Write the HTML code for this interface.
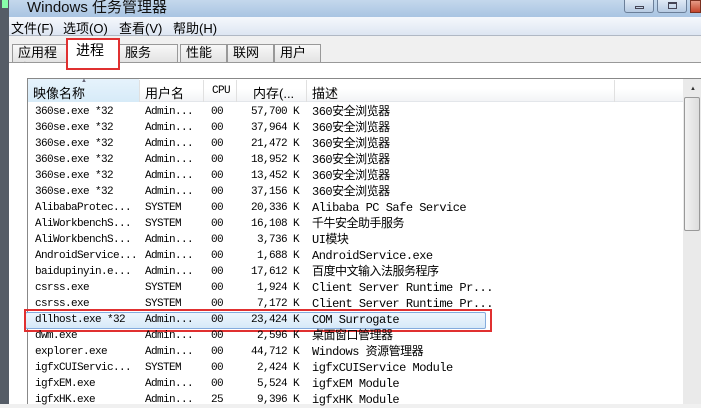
<!DOCTYPE html><html><head><meta charset="utf-8"><style>
*{margin:0;padding:0;box-sizing:border-box}
body{width:701px;height:404px;overflow:hidden;background:#f0f0f0;position:relative;font-family:"Liberation Sans","Noto Sans CJK SC",sans-serif;font-size:12px;color:#000}
.a{position:absolute}
.mono{font-family:"Liberation Mono","Noto Sans CJK SC",monospace;font-size:11px;letter-spacing:-0.6px}
.row{position:absolute;left:28px;width:655px;height:16px;line-height:16px}
.row span{position:absolute;white-space:nowrap}
.tab{position:absolute;top:44px;height:18px;border:1px solid #999;border-bottom:none;background:linear-gradient(#f8f8f8,#e3e3e3);font-size:13px;line-height:16px;padding-left:5px}
.sep{position:absolute;top:80px;width:1px;height:22px;background:#e0e0e0}
</style></head><body>
<div class="a" style="left:0;top:0;width:701px;height:17px;background:linear-gradient(#c4d8ec,#a9c4e2)"></div>
<div class="a" style="left:0;top:0;width:9px;height:404px;background:#555c66"></div>
<div class="a" style="left:2px;top:0;width:6px;height:8px;background:#8fa"></div>
<div class="a" style="left:27px;top:-4px;font-size:15px;color:#111">Windows 任务管理器</div>
<div class="a" style="left:624px;top:0;width:30px;height:13px;border:1px solid #6b7f99;border-top:none;border-radius:0 0 3px 3px;background:linear-gradient(#dfe9f5,#b7cbe3)"><div class="a" style="left:10px;top:6px;width:9px;height:3px;border:1px solid #445"></div></div>
<div class="a" style="left:657px;top:0;width:30px;height:13px;border:1px solid #6b7f99;border-top:none;border-radius:0 0 3px 3px;background:linear-gradient(#dfe9f5,#b7cbe3)"><div class="a" style="left:10px;top:2px;width:9px;height:7px;border:1px solid #445;border-top-width:2px"></div></div>
<div class="a" style="left:690px;top:0;width:11px;height:13px;background:linear-gradient(#e69a86,#c4452b);border:1px solid #7a3020"></div>
<div class="a" style="left:9px;top:17px;width:692px;height:19px;background:linear-gradient(#f5f8fc,#dde6f2);border-bottom:1px solid #b0b8c4"></div>
<div class="a" style="left:11px;top:18px;font-size:13px">文件(F)</div>
<div class="a" style="left:63px;top:18px;font-size:13px">选项(O)</div>
<div class="a" style="left:119px;top:18px;font-size:13px">查看(V)</div>
<div class="a" style="left:173px;top:18px;font-size:13px">帮助(H)</div>
<div class="tab" style="left:12px;width:56px">应用程序</div>
<div class="tab" style="left:119px;width:59px">服务</div>
<div class="tab" style="left:180px;width:47px">性能</div>
<div class="tab" style="left:227px;width:47px">联网</div>
<div class="tab" style="left:274px;width:47px">用户</div>
<div class="a" style="left:9px;top:62px;width:692px;height:342px;background:#fff;border-top:1px solid #999"></div>
<div class="a" style="left:68px;top:40px;width:50px;height:24px;background:#fff;font-size:14px;padding:0 8px;line-height:20px">进程</div>
<div class="a" style="left:66px;top:38px;width:54px;height:32px;border:2px solid #e03030"></div>
<div class="a" style="left:27px;top:78px;width:674px;height:326px;border-top:1px solid #888;border-left:1px solid #888"></div>
<div class="a" style="left:28px;top:79px;width:655px;height:23px;background:linear-gradient(#fff 45%,#f3f4f6);border-bottom:1px solid #e3e6ea"></div>
<div class="a" style="left:28px;top:79px;width:111px;height:23px;background:linear-gradient(#e6f3fc,#d7ebf8)"></div>
<div class="sep" style="left:139px"></div><div class="sep" style="left:203px"></div><div class="sep" style="left:236px"></div><div class="sep" style="left:306px"></div><div class="sep" style="left:614px"></div>
<div class="a" style="left:33px;top:83px;font-size:13px">映像名称</div><div class="a" style="left:81px;top:78px;font-size:6px;color:#667">▲</div>
<div class="a" style="left:145px;top:83px;font-size:13px">用户名</div>
<div class="a mono" style="left:212px;top:85px">CPU</div>
<div class="a" style="left:253px;top:83px;font-size:13px">内存(...</div>
<div class="a" style="left:312px;top:83px;font-size:13px">描述</div>
<div class="a" style="left:683px;top:79px;width:18px;height:325px;background:#eaeaea"></div>
<div class="a" style="left:690px;top:86px;font-size:6px;color:#333">▲</div>
<div class="a" style="left:684px;top:97px;width:16px;height:134px;border:1px solid #999;border-radius:2px;background:linear-gradient(90deg,#f2f2f2,#ddd)"></div>
<div class="a" style="left:25px;top:312px;width:461px;height:17px;background:linear-gradient(#eef6fd,#d6e9f8);border:1px solid #84acdd;border-radius:2px"></div>
<div class="a" style="left:24px;top:309px;width:468px;height:23px;border:2px solid #e03030"></div>
<div id="rows"></div>
<script>
var d=[["360se.exe *32","Admin...","00","57,700 K","360安全浏览器"],["360se.exe *32","Admin...","00","37,964 K","360安全浏览器"],["360se.exe *32","Admin...","00","21,472 K","360安全浏览器"],["360se.exe *32","Admin...","00","18,952 K","360安全浏览器"],["360se.exe *32","Admin...","00","13,452 K","360安全浏览器"],["360se.exe *32","Admin...","00","37,156 K","360安全浏览器"],["AlibabaProtec...","SYSTEM","00","20,336 K","Alibaba PC Safe Service"],["AliWorkbenchS...","SYSTEM","00","16,108 K","千牛安全助手服务"],["AliWorkbenchS...","Admin...","00","3,736 K","UI模块"],["AndroidService...","Admin...","00","1,688 K","AndroidService.exe"],["baidupinyin.e...","Admin...","00","17,612 K","百度中文输入法服务程序"],["csrss.exe","SYSTEM","00","1,924 K","Client Server Runtime Pr..."],["csrss.exe","SYSTEM","00","7,172 K","Client Server Runtime Pr..."],["dllhost.exe *32","Admin...","00","23,424 K","COM Surrogate"],["dwm.exe","Admin...","00","2,596 K","桌面窗口管理器"],["explorer.exe","Admin...","00","44,712 K","Windows 资源管理器"],["igfxCUIServic...","SYSTEM","00","2,424 K","igfxCUIService Module"],["igfxEM.exe","Admin...","00","5,524 K","igfxEM Module"],["igfxHK.exe","Admin...","25","9,396 K","igfxHK Module"]];
var h="";d.forEach(function(r,i){h+='<div class="row mono" style="top:'+(104+i*16)+'px"><span style="left:7px">'+r[0]+'</span><span style="left:117px">'+r[1]+'</span><span style="left:183px">'+r[2]+'</span><span style="right:384px">'+r[3]+'</span><span style="left:284px;font-size:12px;letter-spacing:-0.5px">'+r[4]+'</span></div>'});
document.getElementById("rows").innerHTML=h;
</script>
</body></html>
